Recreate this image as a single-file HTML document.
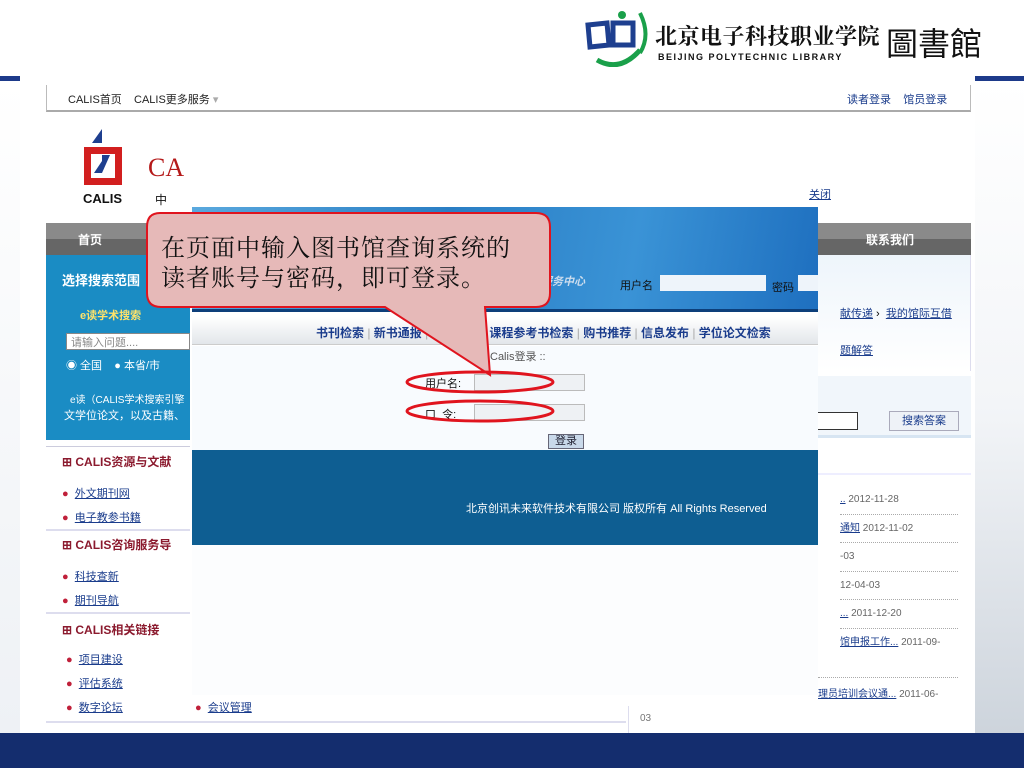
<!DOCTYPE html>
<html><head><meta charset="utf-8"><style>
*{margin:0;padding:0;box-sizing:border-box}
body{width:1024px;height:768px;position:relative;background:#fff;font-family:"Liberation Sans","Noto Sans CJK SC",sans-serif;overflow:hidden;font-size:12px}
.a{position:absolute}
.lnk{text-decoration:underline;color:#1a3c8c}
</style></head><body>
<div class="a" style="left:0;top:76px;width:20px;height:5px;background:#1d3a8a"></div>
<div class="a" style="left:975px;top:76px;width:49px;height:5px;background:#1d3a8a"></div>
<div class="a" style="left:975px;top:81px;width:49px;height:652px;background:linear-gradient(180deg,#fff 0%,#f3f5f8 50%,#cdd4dc 100%)"></div>
<div class="a" style="left:0;top:81px;width:20px;height:652px;background:linear-gradient(180deg,#fff 0%,#eef1f5 100%)"></div>
<svg class="a" style="left:585px;top:5px" width="70" height="62" viewBox="0 0 70 62">
<circle cx="37" cy="10" r="4" fill="#1aa04a"/>
<path d="M12 55 Q35 68 55 45" stroke="#1aa04a" stroke-width="5" fill="none"/>
<path d="M3 20 L22 18 L24 40 L5 42 Z M28 18 L48 18 L48 40 L28 40 Z" fill="none" stroke="#1e3f8f" stroke-width="5"/>
<path d="M55 8 Q66 30 55 48" stroke="#1aa04a" stroke-width="4" fill="none"/>
</svg>
<div class="a" style="left:655px;top:20px;font-size:22px;font-weight:bold;color:#111;letter-spacing:0.5px;font-family:'Noto Serif CJK SC',serif;white-space:nowrap">北京电子科技职业学院</div>
<div class="a" style="left:658px;top:52px;font-size:9px;font-weight:bold;letter-spacing:1.5px;color:#111;white-space:nowrap">BEIJING POLYTECHNIC LIBRARY</div>
<div class="a" style="left:886px;top:19px;font-size:32px;color:#111;font-family:'Noto Sans CJK TC',sans-serif;white-space:nowrap">圖書館</div>

<div class="a" style="left:20px;top:81px;width:955px;height:652px;background:#fff;overflow:hidden">
 <div class="a" style="left:26px;top:4px;width:925px;height:27px;border:1px solid #bbb;border-top:none;border-bottom:2px solid #aaa;background:#fff"></div>
 <div class="a" style="left:48px;top:10px;font-size:11px;color:#222">CALIS首页 &nbsp;&nbsp;&nbsp;CALIS更多服务 <span style="color:#aaa">▾</span></div>
 <div class="a" style="left:827px;top:10px;font-size:11px;color:#1a3c8c">读者登录 &nbsp;&nbsp;&nbsp;馆员登录</div>
 <svg class="a" style="left:62px;top:48px" width="44" height="60" viewBox="0 0 44 60">
 <path d="M20 0 L10 14 L20 14 Z" fill="#1e3f8f"/>
 <rect x="2" y="18" width="38" height="38" fill="#d21f1f"/>
 <rect x="9" y="25" width="24" height="24" fill="#fff"/>
 <path d="M12 44 L20 32 L20 26 L28 26 L20 44 Z" fill="#1e3f8f"/>
 </svg>
 <div class="a" style="left:63px;top:110px;font-size:13px;font-weight:bold;color:#111">CALIS</div>
 <div class="a" style="left:128px;top:72px;font-size:26px;color:#b51a1a;font-family:'Liberation Serif',serif">CA</div>
 <div class="a" style="left:135px;top:110px;font-size:12px;color:#111">中</div>
 <div class="a" style="left:789px;top:105px;font-size:11px"><span class="lnk">关闭</span></div>
 <div class="a" style="left:26px;top:142px;width:144px;height:32px;background:linear-gradient(#8a8a8a 0 50%,#666 50%)"></div>
 <div class="a" style="left:58px;top:150px;color:#fff;font-weight:bold;font-size:12px">首页</div>
 <div class="a" style="left:26px;top:174px;width:144px;height:185px;background:#1a8cc4"></div>
 <div class="a" style="left:42px;top:189px;color:#fff;font-weight:bold;font-size:13px">选择搜索范围</div>
 <div class="a" style="left:60px;top:226px;color:#ffe36a;font-weight:bold;font-size:11px">e读学术搜索</div>
 <div class="a" style="left:46px;top:252px;width:124px;height:17px;background:#fff;border:1px solid #888;font-size:11px;color:#888;padding-left:4px">请输入问题....</div>
 <div class="a" style="left:46px;top:276px;color:#fff;font-size:11px">◉ 全国 &nbsp;&nbsp;&nbsp;● 本省/市</div>
 <div class="a" style="left:50px;top:310px;color:#fff;font-size:10px">e读（CALIS学术搜索引擎</div>
 <div class="a" style="left:44px;top:326px;color:#fff;font-size:11px">文学位论文，以及古籍、</div>
 <div class="a" style="left:26px;top:365px;width:144px;height:1px;background:#ccd"></div>
 <div class="a" style="left:42px;top:372px;color:#8b1a2e;font-weight:bold;font-size:12px">⊞ CALIS资源与文献</div>
 <div class="a" style="left:42px;top:404px;font-size:11px"><span style="color:#c0203a">●</span> &nbsp;<span class="lnk">外文期刊网</span></div>
 <div class="a" style="left:42px;top:428px;font-size:11px"><span style="color:#c0203a">●</span> &nbsp;<span class="lnk">电子教参书籍</span></div>
 <div class="a" style="left:26px;top:448px;width:144px;height:2px;background:#dde"></div>
 <div class="a" style="left:42px;top:455px;color:#8b1a2e;font-weight:bold;font-size:12px">⊞ CALIS咨询服务导</div>
 <div class="a" style="left:42px;top:487px;font-size:11px"><span style="color:#c0203a">●</span> &nbsp;<span class="lnk">科技查新</span></div>
 <div class="a" style="left:42px;top:511px;font-size:11px"><span style="color:#c0203a">●</span> &nbsp;<span class="lnk">期刊导航</span></div>
 <div class="a" style="left:26px;top:531px;width:144px;height:2px;background:#dde"></div>
 <div class="a" style="left:42px;top:540px;color:#8b1a2e;font-weight:bold;font-size:12px">⊞ CALIS相关链接</div>
 <div class="a" style="left:46px;top:570px;font-size:11px"><span style="color:#c0203a">●</span> &nbsp;<span class="lnk">项目建设</span></div>
 <div class="a" style="left:46px;top:594px;font-size:11px"><span style="color:#c0203a">●</span> &nbsp;<span class="lnk">评估系统</span></div>
 <div class="a" style="left:46px;top:618px;font-size:11px"><span style="color:#c0203a">●</span> &nbsp;<span class="lnk">数字论坛</span></div>
 <div class="a" style="left:175px;top:618px;font-size:11px"><span style="color:#c0203a">●</span> &nbsp;<span class="lnk">会议管理</span></div>
 <div class="a" style="left:26px;top:640px;width:580px;height:2px;background:#dde"></div>
 <div class="a" style="left:798px;top:142px;width:153px;height:32px;background:linear-gradient(#8a8a8a 0 50%,#666 50%)"></div>
 <div class="a" style="left:846px;top:150px;color:#fff;font-weight:bold;font-size:12px">联系我们</div>
 <div class="a" style="left:798px;top:174px;width:153px;height:116px;background:linear-gradient(#eef5fb,#fff);border-right:1px solid #dde"></div>
 <div class="a" style="left:820px;top:224px;font-size:11px"><span class="lnk">献传递</span> › &nbsp;<span class="lnk">我的馆际互借</span></div>
 <div class="a" style="left:820px;top:261px;font-size:11px"><span class="lnk">题解答</span></div>
 <div class="a" style="left:798px;top:295px;width:153px;height:62px;background:#f1f6fb;border-bottom:3px solid #d7e5f2"></div>
 <div class="a" style="left:798px;top:331px;width:40px;height:18px;border:1px solid #333;border-left:none;background:#fff"></div>
 <div class="a" style="left:869px;top:330px;width:70px;height:20px;border:1px solid #aab;background:#eef2f7;color:#1a3c8c;font-size:11px;text-align:center;line-height:18px">搜索答案</div>
 <div class="a" style="left:798px;top:392px;width:153px;height:260px;border-top:2px solid #eef"></div>
 <div class="a" style="left:820px;top:405px;font-size:10px;color:#666;line-height:27.5px;width:118px">
 <div style="border-bottom:1px dotted #aaa"><span class="lnk">..</span> 2012-11-28</div>
 <div style="border-bottom:1px dotted #aaa"><span class="lnk">通知</span> 2012-11-02</div>
 <div style="border-bottom:1px dotted #aaa">-03</div>
 <div style="border-bottom:1px dotted #aaa">12-04-03</div>
 <div style="border-bottom:1px dotted #aaa"><span class="lnk">...</span> 2011-12-20</div>
 <div><span class="lnk">馆申报工作...</span> 2011-09-</div>
 </div>
 <div class="a" style="left:798px;top:596px;width:140px;border-top:1px dotted #aaa"></div>
 <div class="a" style="left:798px;top:604px;font-size:10px;color:#666"><span class="lnk">理员培训会议通...</span> 2011-06-</div>
 <div class="a" style="left:608px;top:625px;width:1px;height:30px;background:#dde"></div>
 <div class="a" style="left:620px;top:632px;font-size:10px;color:#777">03</div>
 <div class="a" style="left:170px;top:124px;width:628px;height:495px;background:#fff"></div>
 <div class="a" style="left:172px;top:126px;width:626px;height:105px;background:linear-gradient(100deg,#5aa9de 0%,#2a7ec4 40%,#3a93d6 70%,#1e6fbf 100%);border-bottom:3px solid #0d3f7a"></div>
 <div class="a" style="left:510px;top:192px;font-size:11px;color:#cde;font-style:italic;font-weight:bold">息服务中心</div>
 <div class="a" style="left:600px;top:196px;font-size:11px;color:#111">用户名</div>
 <div class="a" style="left:640px;top:194px;width:106px;height:16px;background:#eef4fa"></div>
 <div class="a" style="left:752px;top:198px;font-size:11px;color:#111">密码</div>
 <div class="a" style="left:778px;top:194px;width:20px;height:16px;background:#eef4fa"></div>
 <div class="a" style="left:172px;top:236px;width:626px;height:28px;background:linear-gradient(#fff,#e2e6ea);border-bottom:1px solid #ccc"></div>
 <div class="a" style="left:296px;top:243px;font-size:12px;font-weight:bold;color:#1a3c8c;white-space:nowrap">书刊检索 <span style="color:#aaa;font-weight:normal">|</span> 新书通报 <span style="color:#aaa;font-weight:normal">|</span> 期刊检索 <span style="color:#aaa;font-weight:normal">|</span> 课程参考书检索 <span style="color:#aaa;font-weight:normal">|</span> 购书推荐 <span style="color:#aaa;font-weight:normal">|</span> 信息发布 <span style="color:#aaa;font-weight:normal">|</span> 学位论文检索</div>
 <div class="a" style="left:172px;top:265px;width:626px;height:104px;background:#f8fbfe"></div>
 <div class="a" style="left:470px;top:267px;font-size:11px;color:#555">Calis登录 ::</div>
 <div class="a" style="left:405px;top:294px;font-size:11px;color:#111">用户名:</div>
 <div class="a" style="left:454px;top:293px;width:111px;height:17px;background:#eef1f4;border:1px solid #bbb"></div>
 <div class="a" style="left:405px;top:325px;font-size:11px;color:#111">口 &nbsp;令:</div>
 <div class="a" style="left:454px;top:323px;width:111px;height:17px;background:#eef1f4;border:1px solid #bbb"></div>
 <div class="a" style="left:528px;top:353px;width:36px;height:15px;border:1px solid #667;background:#c9d9ea;font-size:11px;color:#223;text-align:center;line-height:13px">登录</div>
 <div class="a" style="left:172px;top:369px;width:626px;height:95px;background:#0e5e92"></div>
 <div class="a" style="left:446px;top:419px;font-size:11px;color:#fff;white-space:nowrap">北京创讯未来软件技术有限公司 版权所有 All Rights Reserved</div>
 <div class="a" style="left:172px;top:464px;width:626px;height:150px;background:#fcfdfe"></div>
</div>

<svg class="a" style="left:0;top:0" width="1024" height="768">
<path d="M160 213 H536 Q550 213 550 227 V293 Q550 307 536 307 H485 L490 375 L385 307 H161 Q147 307 147 293 V227 Q147 213 160 213 Z" fill="#e6b9b8" stroke="#e0141e" stroke-width="2"/>
<ellipse cx="480" cy="382" rx="73" ry="10" fill="none" stroke="#e0141e" stroke-width="3"/>
<ellipse cx="480" cy="411" rx="73" ry="10" fill="none" stroke="#e0141e" stroke-width="3"/>
</svg>
<div class="a" style="left:161px;top:231px;font-size:24px;line-height:30px;letter-spacing:1px;color:#111;font-family:'Noto Serif CJK SC',serif;white-space:nowrap">在页面中输入图书馆查询系统的<br>读者账号与密码，即可登录。</div>
<div class="a" style="left:0;top:733px;width:1024px;height:35px;background:#142d6e"></div>
</body></html>
